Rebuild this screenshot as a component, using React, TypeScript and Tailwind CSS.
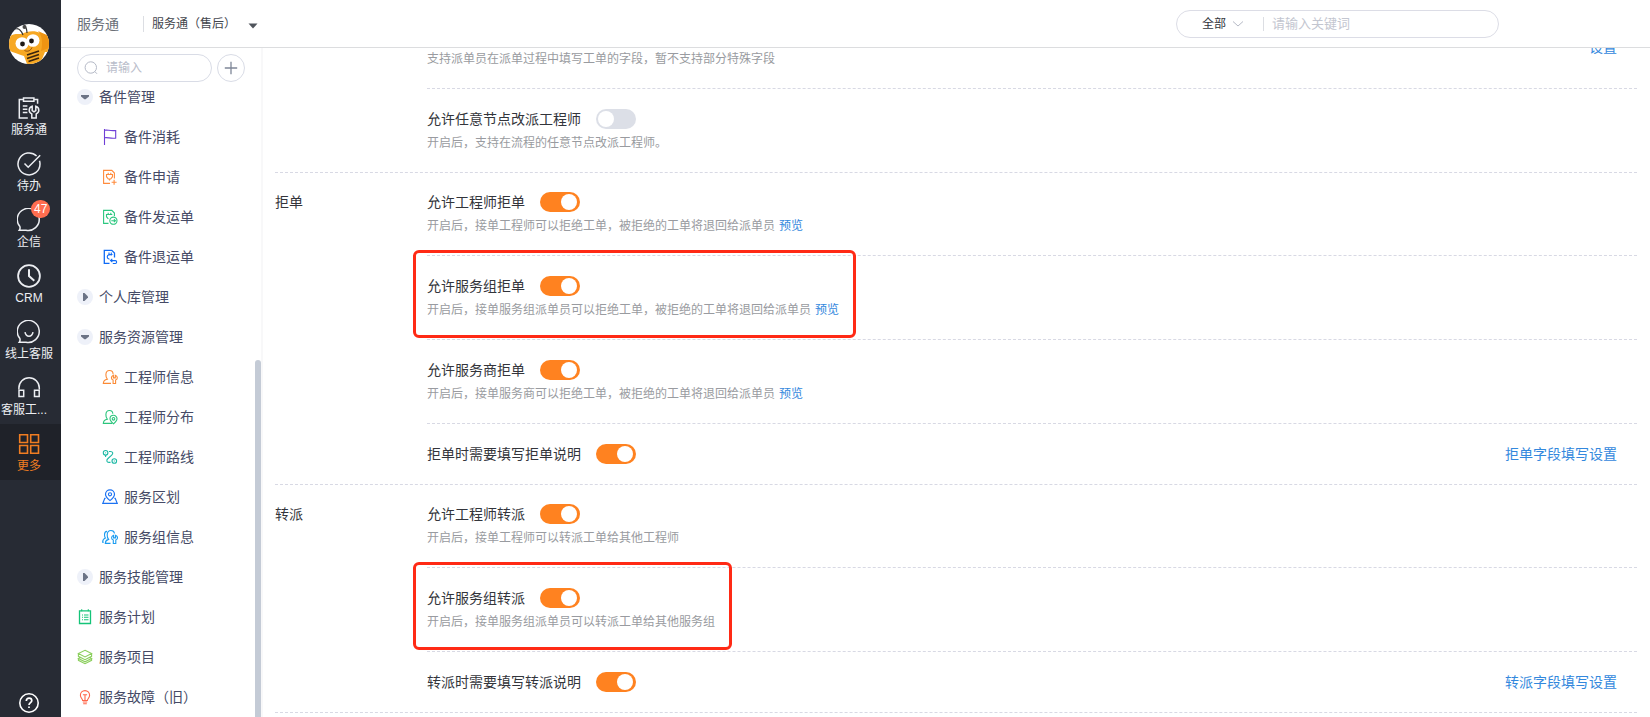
import type { ReactNode } from "react";

/* ---------- Rail icons ---------- */

function RailSvg({ children }: { children: ReactNode }) {
  return (
    <svg width="24" height="24" viewBox="0 0 24 24" fill="none" stroke="currentColor" strokeWidth="1.5" aria-hidden="true">
      {children}
    </svg>
  );
}

const ServiceIcon = () => (
  <RailSvg>
    <path d="M6.5 3.5H2.3V22H10.8M17 3.5h3.6v4.2" />
    <path d="M6.5 1.9h10.4v3.4H6.5z" />
    <path d="M5.8 10h4.6M5.8 13.2h4.6M5.8 16.6h4.6" />
    <path d="M15.2 10.3c-2.2.8-3 2.4-3 3.9 0 1.7 1 3 2.6 3.7V22h4.4v-4.1c1.6-.7 2.6-2 2.6-3.7 0-1.5-.8-3.1-3-3.9v4.2l-1.8 1.3-1.8-1.3z" />
  </RailSvg>
);
const TodoIcon = () => (
  <RailSvg>
    <path d="M19.6 4A11 11 0 1 0 23 12c0-1.2-.2-2.3-.5-3.3" />
    <path d="M7.5 11.500l3.7 3.700L23.2 3.200" />
  </RailSvg>
);
const ChatIcon = () => (
  <RailSvg>
    <path d="M2.3 22.2c.9-1.2 1-2.2.6-3.6A11 11 0 1 1 9 22.2z" />
  </RailSvg>
);
const ClockIcon = () => (
  <RailSvg>
    <circle cx="12" cy="12" r="10.9" strokeWidth="1.8" />
    <path d="M12 5.300v6.700l5.300 4.700" strokeWidth="2" />
  </RailSvg>
);
const SmileIcon = () => (
  <RailSvg>
    <path d="M2.3 22.2c.9-1.2 1-2.2.6-3.6A11 11 0 1 1 9 22.2z" />
    <path d="M8 12.200c.5 2.700 2 4.100 4 4.100s3.500-1.400 4-4.100" />
  </RailSvg>
);
const HeadsetIcon = () => (
  <RailSvg>
    <path d="M1.9 13.500V12a10.200 10.200 0 0 1 20.400 0v1.500" />
    <path d="M2 14.200h4.700v6.300H2zM17.500 14.200h4.700v6.300h-4.700z" />
  </RailSvg>
);
const MoreIcon = () => (
  <RailSvg>
    <path d="M2.7 2.700h7.800v7.800H2.700zM13.700 2.700h7.800v7.800h-7.800zM2.700 13.500h7.800v7.800H2.700zM13.700 13.500h7.800v7.800h-7.800z" strokeWidth="1.6" />
  </RailSvg>
);
const HelpIcon = () => (
  <RailSvg>
    <circle cx="12" cy="12" r="9.2" strokeWidth="1.6" />
    <path d="M9.3 10c0-1.700 1.100-2.800 2.800-2.800s2.700 1.100 2.700 2.500c0 1.900-2.800 2.100-2.800 4.300M12 15.400v1.700" strokeWidth="1.7" />
  </RailSvg>
);

function Avatar() {
  return (
    <svg width="40" height="40" viewBox="0 0 40 40" role="img" aria-label="头像">
      <defs>
        <clipPath id="avatar-clip">
          <circle cx="20" cy="20" r="20" />
        </clipPath>
      </defs>
      <g clipPath="url(#avatar-clip)">
        <rect width="40" height="40" fill="#ffffff" />
        <path d="M-2 16C2 9 8 10 12 10c6-3 14-4 19-1 3 3 5 3 9 5v14H36l-5 12H18l-3-8C9 30 2 28-2 25z" fill="#f7a823" />
        <path d="M29 7c4 4 5 12 3 20l8-3V12z" fill="#ee9412" />
        <path d="M14 11C12 6 9 4 6 5M18 9c0-4-1-6-3-8" stroke="#333" strokeWidth="1.2" fill="none" />
        <circle cx="15.5" cy="3" r="2" fill="#4a4a4a" />
        <ellipse cx="13" cy="19.5" rx="6.5" ry="6.3" fill="#fff" />
        <ellipse cx="24" cy="16.5" rx="6.5" ry="6.3" fill="#fff" />
        <circle cx="13.5" cy="20" r="2.4" fill="#1f1a17" />
        <circle cx="22.5" cy="17" r="2.4" fill="#1f1a17" />
        <path d="M15.500 26.500c3 1.500 6 .5 7.500-3" stroke="#8a4a10" strokeWidth="1" fill="none" />
        <path d="M18 31l12-4M18 34.500l12-4M19.500 37.500l10.500-3.500" stroke="#3a2610" strokeWidth="1.8" />
      </g>
    </svg>
  );
}

/* ---------- Tree icons ---------- */

function TreeSvg({ children, className }: { children: ReactNode; className: string }) {
  return (
    <svg width="16" height="16" viewBox="0 0 16 16" fill="none" stroke="currentColor" strokeWidth="1.1" className={"shrink-0 " + className} aria-hidden="true">
      {children}
    </svg>
  );
}

const FlagIcon = () => (
  <TreeSvg className="text-[#6f3fd6]">
    <path d="M2.500 0v16M2.500 1.300c3-.8 5 .9 11.200.2v7.600c-5.500.7-7.700-1-11.200-.3" />
  </TreeSvg>
);
const ApplyIcon = () => (
  <TreeSvg className="text-[#ff8b3d]">
    <path d="M8 14.400H1.600V1.400h8.200l2.600 2.600v5.500" />
    <path d="M4.500 5.500h6v2.200L8.700 10H6.300L4.500 7.700zM6.200 3.800v1.700M8.800 3.800v1.700M7.500 10v1.500M9.600 13.300h5M12.100 10.800v5" />
  </TreeSvg>
);
const ShipIcon = () => (
  <TreeSvg className="text-[#2bc77f]">
    <path d="M6.500 14.400H1.600V1.400h8.200l2.600 2.600v3" />
    <path d="M10.300 5.500H4.500v2.200L6.300 10M6.200 3.800v1.700M8.800 3.800v1.700" />
    <circle cx="11.4" cy="11.7" r="3.6" />
    <path d="M9.300 11.700h4M11.900 10.200l1.500 1.500-1.500 1.500" />
  </TreeSvg>
);
const ReturnIcon = () => (
  <TreeSvg className="text-[#0f6bf5]">
    <path d="M7.500 14.400H2.300V1.400h7.500L12.500 4v4.500" strokeWidth="1.3" />
    <path d="M10.500 5.500c-3-.4-5.300.5-5.300 2.500 0 1.500 1 2 2.300 2.200M7 3.600v3M9.300 3.600v3M8.500 11.600h4.800c1.800 0 1.800 2.900 0 2.900h-2.500M10.300 9.800l-1.800 1.800 1.800 1.600" />
  </TreeSvg>
);
const EngineerIcon = () => (
  <TreeSvg className="text-[#fb8a35]">
    <path d="M9 14.400H1.300c.1-2.600 1.500-3.700 4-4.200C4.300 9 3.800 7.600 3.900 5.500 4 2.900 5.600 1.500 7.500 1.500s3.600 1.300 3.600 3.700" />
    <path d="M11.400 6.300c-1.400.5-2 1.400-2 2.400 0 1.200.7 2 1.700 2.400v3.400h2.500v-3.400c1-.4 1.700-1.200 1.700-2.400 0-1-.6-1.900-2-2.400v2.600h-1.900z" />
  </TreeSvg>
);
const EngineerMapIcon = () => (
  <TreeSvg className="text-[#2bc57c]">
    <path d="M10 14.400H1.300c.1-2.600 1.500-3.700 4-4.200C4.300 9 3.800 7.600 3.900 5.500 4 2.900 5.600 1.500 7.500 1.500s3.300 1.300 3.300 3.300" />
    <path d="M11.500 14.800C9.200 12.800 8 11.500 8 9.800a3.500 3.500 0 0 1 7 0c0 1.700-1.200 3-3.500 5z" />
    <circle cx="11.5" cy="9.8" r="1.3" />
  </TreeSvg>
);
const RouteIcon = () => (
  <TreeSvg className="text-[#1db9a5]">
    <circle cx="3.6" cy="3.8" r="2.3" />
    <circle cx="12.3" cy="12" r="2.3" />
    <path d="M3.600 3.400v.8M12.300 11.600v.8M7 2.500h1.500c2.400 0 3 2 1.200 3.600L6 9.500c-2 1.900-1.300 3.900 1 3.900h1.500M3.600 6.100v1.800" />
  </TreeSvg>
);
const AreaIcon = () => (
  <TreeSvg className="text-[#1c72f2]">
    <path d="M8 11.600C4.700 9 3.500 7.300 3.500 5.300a4.500 4.500 0 0 1 9 0c0 2-1.200 3.700-4.500 6.300z" strokeWidth="1.2" />
    <circle cx="8" cy="5.3" r="1.6" />
    <path d="M3.600 9.300H2.800L.8 14.400h14.400l-2-5.100h-.8" strokeWidth="1.2" />
  </TreeSvg>
);
const GroupIcon = () => (
  <TreeSvg className="text-[#1b9cf0]">
    <path d="M8.500 14.400H3.300c.1-2.300 1.300-3.500 3.300-4-1-1.200-1.500-2.600-1.400-4.700.1-2.600 1.700-4.200 3.800-4.200s3.200 1 3.500 3" />
    <path d="M5 2.400C3.300 2.500 2.500 4 2.500 5.800c0 1.400.2 2.400.9 3.300C1.600 9.700.7 11 .6 13.200h1.200" />
    <path d="M11.600 6.300c-1.400.5-2 1.400-2 2.400 0 1.200.7 2 1.700 2.400v3.400h2.500v-3.400c1-.4 1.700-1.200 1.700-2.400 0-1-.6-1.900-2-2.400v2.600h-1.900z" />
  </TreeSvg>
);
const PlanIcon = () => (
  <TreeSvg className="text-[#14c478]">
    <path d="M2.500 1.900h11v12.600h-11z" strokeWidth="1.3" />
    <path d="M4.700.3v2M11.300.3v2M5 6h1M7 6h4.500M5 8.300h1M7 8.300h4.500M5 10.700h1M7 10.700h4.500" />
  </TreeSvg>
);
const LayersIcon = () => (
  <TreeSvg className="text-[#8ccf5e]">
    <path d="M8 1.300l6.600 3.200L8 7.900 1.400 4.500zM1.400 4.700v2.600L8 10.700l6.600-3.400V4.700M3.500 8.500L1.400 9.500 8 12.800l6.600-3.300-2.100-1M1.400 9.500v1.800L8 14.700l6.600-3.400V9.500" />
  </TreeSvg>
);
const BulbIcon = () => (
  <TreeSvg className="text-[#ff664a]">
    <path d="M5.600 11.500c0-1.600-2.200-2.700-2.200-5.300a4.600 4.600 0 0 1 9.200 0c0 2.600-2.200 3.700-2.200 5.300zM5.800 13h4.400M6.200 14.700h3.600M8 11.500V6.200M5.900 5.800h4.200" />
  </TreeSvg>
);

function Disclosure({ open }: { open: boolean }) {
  return (
    <svg width="16" height="16" viewBox="0 0 16 16" className="shrink-0" aria-hidden="true">
      <circle cx="8" cy="8" r="8" fill="#eef1f9" />
      {open ? <path d="M4 6h8v1.500L8.600 10.300H7.400L4 7.500z" fill="#6b7386" /> : <path d="M6 4h1.500L11 7.400v1.200L7.500 12H6z" fill="#6b7386" />}
    </svg>
  );
}

/* ---------- Data ---------- */

type RailEntry = { label: string; icon: ReactNode; badge?: string; active?: boolean; clipped?: boolean };

const railItems: RailEntry[] = [
  { label: "服务通", icon: <ServiceIcon /> },
  { label: "待办", icon: <TodoIcon /> },
  { label: "企信", icon: <ChatIcon />, badge: "47" },
  { label: "CRM", icon: <ClockIcon /> },
  { label: "线上客服", icon: <SmileIcon /> },
  { label: "客服工...", icon: <HeadsetIcon />, clipped: true },
  { label: "更多", icon: <MoreIcon />, active: true },
];

type TreeEntry = { label: string; icon: ReactNode; child?: boolean };

const treeItems: TreeEntry[] = [
  { label: "备件管理", icon: <Disclosure open /> },
  { label: "备件消耗", icon: <FlagIcon />, child: true },
  { label: "备件申请", icon: <ApplyIcon />, child: true },
  { label: "备件发运单", icon: <ShipIcon />, child: true },
  { label: "备件退运单", icon: <ReturnIcon />, child: true },
  { label: "个人库管理", icon: <Disclosure open={false} /> },
  { label: "服务资源管理", icon: <Disclosure open /> },
  { label: "工程师信息", icon: <EngineerIcon />, child: true },
  { label: "工程师分布", icon: <EngineerMapIcon />, child: true },
  { label: "工程师路线", icon: <RouteIcon />, child: true },
  { label: "服务区划", icon: <AreaIcon />, child: true },
  { label: "服务组信息", icon: <GroupIcon />, child: true },
  { label: "服务技能管理", icon: <Disclosure open={false} /> },
  { label: "服务计划", icon: <PlanIcon /> },
  { label: "服务项目", icon: <LayersIcon /> },
  { label: "服务故障（旧）", icon: <BulbIcon /> },
];

type Setting = { id: string; title?: string; on?: boolean; note?: string; preview?: boolean; link?: string; marked?: boolean };

const sections: { name: string; settings: Setting[] }[] = [
  {
    name: "",
    settings: [
      { id: "dispatch-fields", note: "支持派单员在派单过程中填写工单的字段，暂不支持部分特殊字段", link: "设置" },
      { id: "reassign-any", title: "允许任意节点改派工程师", on: false, note: "开启后，支持在流程的任意节点改派工程师。" },
    ],
  },
  {
    name: "拒单",
    settings: [
      { id: "reject-engineer", title: "允许工程师拒单", on: true, note: "开启后，接单工程师可以拒绝工单，被拒绝的工单将退回给派单员", preview: true },
      { id: "reject-group", title: "允许服务组拒单", on: true, note: "开启后，接单服务组派单员可以拒绝工单，被拒绝的工单将退回给派单员", preview: true, marked: true },
      { id: "reject-vendor", title: "允许服务商拒单", on: true, note: "开启后，接单服务商可以拒绝工单，被拒绝的工单将退回给派单员", preview: true },
      { id: "reject-reason", title: "拒单时需要填写拒单说明", on: true, link: "拒单字段填写设置" },
    ],
  },
  {
    name: "转派",
    settings: [
      { id: "transfer-engineer", title: "允许工程师转派", on: true, note: "开启后，接单工程师可以转派工单给其他工程师" },
      { id: "transfer-group", title: "允许服务组转派", on: true, note: "开启后，接单服务组派单员可以转派工单给其他服务组", marked: true },
      { id: "transfer-reason", title: "转派时需要填写转派说明", on: true, link: "转派字段填写设置" },
    ],
  },
];

/* ---------- Parts ---------- */

function Rail() {
  return (
    <nav className="flex w-[61px] shrink-0 flex-col bg-[#272b34] text-white">
      <div className="flex h-[88px] items-center pl-[9px]">
        <Avatar />
      </div>
      {railItems.map((item) => (
        <a
          key={item.label}
          href="#"
          className={"relative flex h-14 flex-col pt-2 text-xs leading-5 " + (item.active ? "bg-[#1f2229] text-[#f07d22]" : "text-[#eceef2]")}
        >
          <span className="pl-[17px]">{item.icon}</span>
          <span className={item.clipped ? "pl-px text-left" : "pr-[3px] text-center"}>{item.label}</span>
          {item.badge && (
            <span className="absolute top-0 left-[31px] h-[18px] rounded-full bg-[#ff6e50] px-[3px] text-xs leading-[18px] text-white">
              {item.badge}
            </span>
          )}
        </a>
      ))}
      <button type="button" aria-label="帮助" className="mt-auto mb-0.5 pl-[17px]">
        <HelpIcon />
      </button>
    </nav>
  );
}

function Header() {
  return (
    <header className="flex h-12 shrink-0 items-center border-b border-[#dcdddf] bg-white pl-4">
      <h1 className="text-sm text-[#6b6f78]">服务通</h1>
      <span className="ml-6 h-4 w-px bg-[#dcdee3]" />
      <button type="button" className="ml-2 flex items-center gap-3 text-xs text-[#43464d]">
        服务通（售后）
        <svg width="10" height="6" viewBox="0 0 10 6" className="mt-1" aria-hidden="true">
          <path d="M.5.5h9L5 5.500z" fill="#50545c" />
        </svg>
      </button>
      <div className="mr-[151px] ml-auto flex h-7 w-[323px] items-center rounded-full border border-[#dcdde6] pl-[25px]">
        <select aria-label="搜索范围" className="w-[26px] appearance-none text-xs text-[#33363d] outline-none">
          <option>全部</option>
        </select>
        <svg width="12" height="8" viewBox="0 0 12 8" fill="none" stroke="#b6bac6" className="ml-1" aria-hidden="true">
          <path d="M1 1.500l5 4.500 5-4.500" />
        </svg>
        <span className="ml-[19px] h-3.5 w-px bg-[#dcdee3]" />
        <input aria-label="关键词" placeholder="请输入关键词" className="ml-2 min-w-0 flex-1 text-[13px] outline-none placeholder:text-[#c3c6d0]" />
      </div>
    </header>
  );
}

function Sidebar() {
  return (
    <aside className="relative flex w-[200px] shrink-0 flex-col overflow-hidden bg-white">
      <div className="z-10 mt-1.5 flex shrink-0 gap-[5px] pl-4">
        <label className="flex h-7 w-[135px] items-center rounded-full border border-[#d9dce6] bg-white pl-1.5">
          <svg width="14" height="14" viewBox="0 0 14 14" fill="none" stroke="#b4b9c6" className="shrink-0" aria-hidden="true">
            <circle cx="6.8" cy="6.5" r="5.7" />
            <path d="M10.800 10.500l2.200 2.300" />
          </svg>
          <input aria-label="搜索菜单" placeholder="请输入" className="ml-2 min-w-0 flex-1 text-xs outline-none placeholder:text-[#b9bdca]" />
        </label>
        <button type="button" aria-label="新增" className="flex h-7 w-7 items-center justify-center rounded-full border border-[#d9dce6] bg-white">
          <svg width="14" height="14" viewBox="0 0 14 14" stroke="#7f8798" strokeWidth="1.3" aria-hidden="true">
            <path d="M7 .8v12.400M.8 7h12.400" />
          </svg>
        </button>
      </div>
      <ul className="-mt-[5px]">
        {treeItems.map((item) => (
          <li key={item.label}>
            <a href="#" className={"flex h-10 items-center gap-1.5 text-sm text-[#454a66] " + (item.child ? "pl-[41px]" : "pl-4")}>
              {item.icon}
              {item.label}
            </a>
          </li>
        ))}
      </ul>
      <div className="absolute top-78 right-0 bottom-0 w-1.5 rounded-t-full bg-[#c4cbd6]" />
    </aside>
  );
}

function SettingRow({ setting, first }: { setting: Setting; first: boolean }) {
  return (
    <div className={"flex items-center justify-between pr-5 pb-5 " + (first ? "pt-[19px]" : "border-t border-dashed border-[#d8d9e4] pt-5")}>
      <div className="relative">
        <div className="flex h-5 items-center gap-[15px]">
          {setting.title && (
            <>
              <label htmlFor={setting.id} className="text-sm text-[#33353b]">
                {setting.title}
              </label>
              <input
                id={setting.id}
                type="checkbox"
                role="switch"
                defaultChecked={setting.on}
                className="h-5 w-10 appearance-none rounded-full bg-[#dcdfe7] p-0.5 before:block before:size-4 before:rounded-full before:bg-white checked:bg-[#ff8220] checked:before:ml-[19px]"
              />
            </>
          )}
        </div>
        {setting.note && (
          <p className="mt-1.5 text-xs leading-[17px] text-[#999ba0]">
            {setting.note}
            {setting.preview && (
              <a href="#" className="ml-1 text-[#3388dd]">
                预览
              </a>
            )}
          </p>
        )}
        {setting.marked && (
          <span className="pointer-events-none absolute -top-[26px] -right-[17px] -bottom-[19px] -left-[14px] rounded-md border-3 border-[#ff2a15]" />
        )}
      </div>
      {setting.link && (
        <a href="#" className="text-sm text-[#3388dd]">
          {setting.link}
        </a>
      )}
    </div>
  );
}

function SettingsPanel() {
  return (
    <main className="min-w-0 flex-1 overflow-hidden border-l-2 border-[#f8f8f9] bg-white pr-[13px] pl-3">
      <div className="-mt-[43px] border-b border-dashed border-[#d8d9e4]">
        {sections.map((section) => (
          <section key={section.name} className="flex border-t border-dashed border-[#d8d9e4]">
            <h2 className="w-38 shrink-0 pt-[19px] text-sm leading-5 text-[#33353b]">{section.name}</h2>
            <div className="min-w-0 flex-1">
              {section.settings.map((setting, index) => (
                <SettingRow key={setting.id} setting={setting} first={index === 0} />
              ))}
            </div>
          </section>
        ))}
      </div>
    </main>
  );
}

export default function App() {
  return (
    <div className="flex h-screen overflow-hidden bg-white font-['Liberation_Sans','Noto_Sans_CJK_SC',sans-serif]">
      <Rail />
      <div className="flex min-w-0 flex-1 flex-col">
        <Header />
        <div className="flex min-h-0 flex-1">
          <Sidebar />
          <SettingsPanel />
        </div>
      </div>
    </div>
  );
}
